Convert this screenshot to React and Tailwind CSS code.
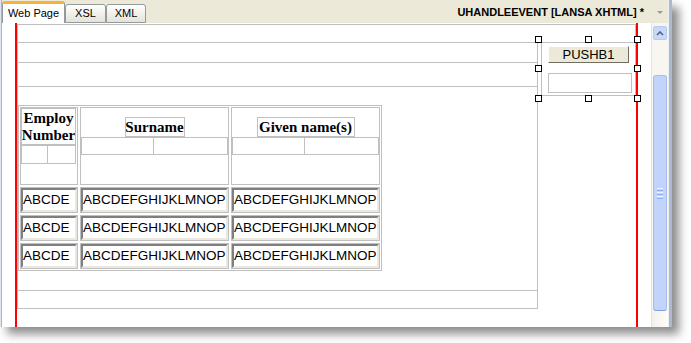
const sans = { fontFamily: '"Liberation Sans", Arial, sans-serif' };
const serif = { fontFamily: '"Liberation Serif", "Times New Roman", serif' };

// Sunken XP-style text field
const Field = ({ text }) => (
    <div className="h-full w-full overflow-hidden whitespace-nowrap border-2 border-t-[#7f7f7f] border-l-[#7f7f7f] border-b-[#ebe9df] border-r-[#ebe9df] bg-white text-[13.5px] leading-[20px] text-black">
        {text}
    </div>
);

const DataCell = ({ text }) => (
    <div className="border border-[#c0c0c0]">
        <Field text={text} />
    </div>
);

const SubRow = ({ width, split, height }) => (
    <div className="flex border border-[#c0c0c0]" style={{ width, height }}>
        <div className="h-full border-r border-[#c0c0c0]" style={{ width: split }} />
        <div className="h-full flex-1" />
    </div>
);

const Label = ({ children, className }) => (
    <div
        className={`flex items-center justify-center border border-[#c0c0c0] text-center text-[15px] font-bold text-black ${className}`}
        style={serif}
    >
        {children}
    </div>
);

const Handle = ({ x, y }) => (
    <div
        className="absolute h-[7px] w-[7px] border border-black bg-white"
        style={{ left: x, top: y }}
    />
);

const Tab = ({ label, width }) => (
    <div
        className="mt-[4px] flex h-[19px] items-center justify-center rounded-t-[3px] border border-[#919b9c] bg-linear-to-b from-white to-[#e4e2d8] text-[11px] text-black"
        style={{ width }}
    >
        {label}
    </div>
);

export default function App() {
    const rows = [0, 1, 2];

    return (
        <div className="relative h-[343px] w-[691px] overflow-hidden bg-white" style={sans}>
            {/* window */}
            <div className="flex h-[327px] w-[672px] shadow-[7px_7px_9px_rgba(0,0,0,0.45)]">
                <div className="flex w-[2px]">
                    <div className="w-[1px] bg-[#dfe5ef]" />
                    <div className="w-[1px] bg-[#9fb5dd]" />
                </div>

                <div className="flex w-[666px] flex-col">
                    {/* tab strip */}
                    <div className="flex h-[23px] items-start bg-[#ece9d8]">
                        <div className="mt-[1px] flex h-[22px] w-[63px] items-center justify-center rounded-t-[3px] border-x border-t-[3px] border-x-[#919b9c] border-t-[#f5b33a] bg-white pb-[1px] text-[11px] text-black">
                            Web Page
                        </div>
                        <Tab label="XSL" width={41} />
                        <Tab label="XML" width={40} />
                        <div className="ml-auto flex h-[23px] items-center pt-[2px]">
                            <span className="text-[11px] font-bold text-black">
                                UHANDLEEVENT [LANSA XHTML] *
                            </span>
                            <span className="ml-[13px] mr-[5px] h-0 w-0 border-x-[3px] border-t-[3px] border-x-transparent border-t-[#9a9a9a]" />
                        </div>
                    </div>

                    {/* body */}
                    <div className="flex h-[304px]">
                        <div className="flex w-[649px] bg-white">
                            <div className="w-[13px]" />
                            <div className="w-[2px] bg-[#ff0000]" />

                            <div className="w-[619px] pt-[1px]">
                                <div className="h-[18px] border-x border-t border-[#c0c0c0]" />
                                <div className="flex items-start">
                                    <div className="flex h-[267px] w-[521px] flex-col border border-[#c0c0c0]">
                                        <div className="h-[20px] border-b border-[#c0c0c0]" />
                                        <div className="h-[24px] border-b border-[#c0c0c0]" />
                                        <div className="h-[204px] border-b border-[#c0c0c0] pt-[18px]">
                                            <div className="grid w-max grid-cols-[58px_149px_149px] grid-rows-[78px_26px_26px_26px] gap-[2px] border border-[#c0c0c0] p-[1px]">
                                                {/* header */}
                                                <div className="border border-[#c0c0c0]">
                                                    <Label className="h-[37px] w-[55px] overflow-hidden leading-[17px]">
                                                        Employ
                                                        <br />
                                                        Number
                                                    </Label>
                                                    <SubRow width={55} split={26} height={19} />
                                                </div>
                                                <div className="flex flex-col items-center border border-[#c0c0c0] pt-[9px]">
                                                    <Label className="h-[20px] w-[60px] leading-[18px]">Surname</Label>
                                                    <SubRow width={147} split={72} height={18} />
                                                </div>
                                                <div className="flex flex-col items-center border border-[#c0c0c0] pt-[9px]">
                                                    <Label className="h-[20px] w-[98px] leading-[18px]">Given name(s)</Label>
                                                    <SubRow width={147} split={72} height={18} />
                                                </div>

                                                {rows.map((r) => (
                                                    <div key={r} className="contents">
                                                        <DataCell text="ABCDE" />
                                                        <DataCell text="ABCDEFGHIJKLMNOP" />
                                                        <DataCell text="ABCDEFGHIJKLMNOP" />
                                                    </div>
                                                ))}
                                            </div>
                                        </div>
                                        <div className="flex-1" />
                                    </div>

                                    <div className="ml-[3px] h-[54px] w-[95px] border border-[#c0c0c0] pl-[6px] pt-[3px]">
                                        <div className="flex h-[17px] w-[81px] items-center justify-center border border-t-white border-l-white border-b-[#716f64] border-r-[#716f64] bg-[#ece9d8] text-[13px] text-black">
                                            PUSHB1
                                        </div>
                                        <div className="mt-[10px] h-[20px] w-[84px] border border-[#c0c0c0]" />
                                    </div>
                                </div>
                            </div>

                            <div className="w-[2px] bg-[#ff0000]" />
                            <div className="w-[13px]" />
                        </div>

                        {/* scrollbar */}
                        <div className="flex w-[17px] flex-col border-l border-[#e4e3dc] bg-[#f7f6f1]">
                            <div className="mx-[1px] mt-[3px] flex h-[14px] items-center justify-center rounded-[2px] border border-[#b7c9f3] bg-[#c8d8fb]">
                                <svg width="8" height="5" viewBox="0 0 8 5">
                                    <path d="M1 4 L4 1 L7 4" fill="none" stroke="#4d6185" strokeWidth="1.6" />
                                </svg>
                            </div>
                            <div className="h-[35px]" />
                            <div className="mx-[1px] flex h-[236px] flex-col items-center justify-center gap-[1px] rounded-[3px] border border-[#a7bdf0] border-b-[#7e9fe0] bg-[#c3d4fc]">
                                <div className="h-[1px] w-[6px] bg-[#eef3fe]" />
                                <div className="h-[1px] w-[6px] bg-[#8cb0f8]" />
                                <div className="h-[1px] w-[6px] bg-[#eef3fe]" />
                                <div className="h-[1px] w-[6px] bg-[#8cb0f8]" />
                                <div className="h-[1px] w-[6px] bg-[#eef3fe]" />
                                <div className="h-[1px] w-[6px] bg-[#8cb0f8]" />
                            </div>
                            <div className="flex-1 bg-linear-to-r from-[#f3f1ea] to-[#fdfdfb]" />
                        </div>
                    </div>
                </div>

                <div className="flex w-[4px]">
                    <div className="w-[1px] bg-[#efeee7]" />
                    <div className="w-[3px] bg-[#a9b9d6]" />
                </div>
            </div>

            {/* selection handles around the button panel */}
            <Handle x={535} y={36} />
            <Handle x={585} y={36} />
            <Handle x={634} y={36} />
            <Handle x={535} y={65} />
            <Handle x={634} y={65} />
            <Handle x={535} y={95} />
            <Handle x={585} y={95} />
            <Handle x={634} y={95} />
        </div>
    );
}
